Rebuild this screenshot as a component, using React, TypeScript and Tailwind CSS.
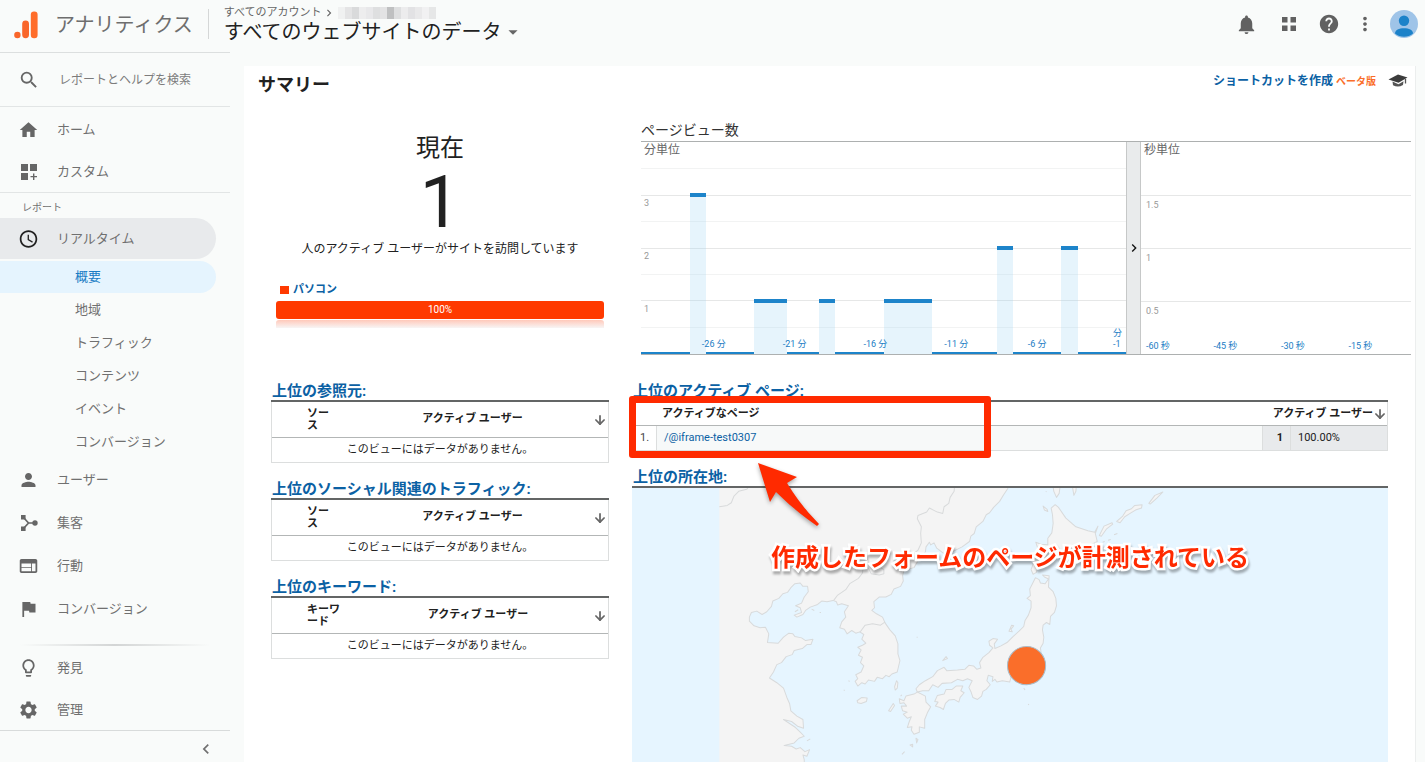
import type { ReactNode } from "react";
import { ArrowDown } from "lucide-react";
import {
  MdAccessTime,
  MdArrowDropDown,
  MdChevronLeft,
  MdChevronRight,
  MdFlag,
  MdHelp,
  MdHome,
  MdLightbulbOutline,
  MdMoreVert,
  MdNotifications,
  MdPerson,
  MdSearch,
  MdSettings,
  MdWeb,
} from "react-icons/md";

const Logo = () => (
  <svg width="24" height="28" viewBox="0 0 24 28" aria-hidden="true">
    <circle cx="3.4" cy="24" r="3.2" fill="#f9662a" />
    <rect x="8.2" y="9.5" width="6.8" height="17.7" rx="3.4" fill="#f9662a" />
    <rect x="16.8" y="0.5" width="6.8" height="26.7" rx="3.2" fill="#ff6d2a" />
  </svg>
);

const CustomIcon = () => (
  <svg width="18" height="18" viewBox="0 0 18 18" fill="currentColor" aria-hidden="true">
    <path d="M1 1h7v7H1zM10 1h7v7h-7zM1 10h7v7H1zM13 10.5h1.4v2.4H17v1.4h-2.6V17H13v-2.7h-2.5v-1.4H13z" />
  </svg>
);

const AcquisitionIcon = () => (
  <svg width="18" height="18" viewBox="0 0 18 18" fill="currentColor" aria-hidden="true">
    <path d="M1 1h4.6v4.6H1zM1 12.4h4.6V17H1z" />
    <circle cx="15" cy="9" r="2.7" />
    <path d="M4 4l4.5 5L4 14M8.5 9H14" fill="none" stroke="currentColor" strokeWidth="1.7" />
  </svg>
);

const AppsIcon = () => (
  <svg width="14" height="14" viewBox="0 0 14 14" fill="currentColor" aria-hidden="true">
    <path d="M0 0h5.5v5.5H0zM8.5 0H14v5.5H8.5zM0 8.5h5.5V14H0zM8.5 8.5H14V14H8.5z" />
  </svg>
);

const CapIcon = () => (
  <svg width="20" height="14" viewBox="0 0 20 14" aria-hidden="true">
    <path d="M0.500 5.500L10 0.500 19.500 3.500 10.500 8.800Z" fill="#3c3c3c" />
    <path d="M4.500 7.500L10.500 10.300 15.500 7.200 15 11Q10 14 5 11.200Z" fill="#555" />
    <path d="M17.500 5V9.500" stroke="#555" strokeWidth="1.300" />
  </svg>
);

const Avatar = () => (
  <svg width="28" height="28" viewBox="0 0 28 28" aria-hidden="true">
    <circle cx="14" cy="14" r="14" fill="#9fc4e8" />
    <circle cx="14" cy="10.8" r="5.2" fill="#1c82c9" />
    <path d="M5 23.500c0-3.600 4-5.300 9-5.300s9 1.700 9 5.300a14 14 0 0 1-18 0z" fill="#1c82c9" />
  </svg>
);

// blurred account name
const mosaic = [
  "bg-[#f0f1f1]", "bg-[#e4e4e5]", "bg-[#d9dadb]", "bg-[#ededee]", "bg-[#e8e8ea]", "bg-[#dedfe0]", "bg-[#e3e3e4]",
  "bg-[#bfc0c1]", "bg-[#dedfe0]", "bg-[#ececed]", "bg-[#e2e2e4]", "bg-[#e9e9ea]", "bg-[#f1f1f2]", "bg-[#e6e7e7]",
];

const Header = () => (
  <header className="flex h-[52px] items-center pb-1 pr-[7px]">
    <a href="#" className="flex items-center gap-[17px] pl-[14px] pt-0.5 text-xl leading-7 text-[#6e6e6e]">
      <Logo />
      アナリティクス
    </a>
    <div className="ml-[15px] h-[30px] w-px bg-[#d5d7d7]" />
    <div className="ml-[15px] flex flex-col">
      <div className="flex h-4 items-center text-[11px] leading-4 text-[#666]">
        すべてのアカウント
        <MdChevronRight className="text-sm" />
        <span className="ml-0.5 flex h-3">
          {mosaic.map((color, i) => (
            <span key={i} className={`h-3 w-[7px] ${color}`} />
          ))}
        </span>
      </div>
      <button className="flex items-center text-xl leading-[22px] text-[#212121]">
        すべてのウェブサイトのデータ
        <MdArrowDropDown className="text-[22px] text-[#666]" />
      </button>
    </div>
    <div className="ml-auto flex items-center text-[#616161]">
      <button aria-label="通知" className="mr-6"><MdNotifications className="text-[23px]" /></button>
      <button aria-label="アプリ" className="mr-[22px]"><AppsIcon /></button>
      <button aria-label="ヘルプ" className="mr-[14px]"><MdHelp className="text-[22px]" /></button>
      <button aria-label="その他" className="mr-[14px]"><MdMoreVert className="text-[22px]" /></button>
      <button aria-label="アカウント"><Avatar /></button>
    </div>
  </header>
);

const NavItem = ({ icon, label, className }: { icon: ReactNode; label: string; className: string }) => (
  <a href="#" className={`flex items-center gap-[18px] pl-[18px] pt-px text-[13px] ${className}`}>
    <span className="flex w-[21px] justify-center text-[22px] text-[#666]">{icon}</span>
    {label}
  </a>
);

const subItems = ["地域", "トラフィック", "コンテンツ", "イベント", "コンバージョン"];

const Sidebar = () => (
  <nav className="flex w-[230px] shrink-0 flex-col border-t border-[#dcdfdf] text-[#707070]">
    <div className="flex h-[54px] items-center gap-[19px] border-b border-[#e2e5e5] pl-[18px]">
      <MdSearch className="text-[22px] text-[#666]" />
      <input
        aria-label="レポートとヘルプを検索"
        placeholder="レポートとヘルプを検索"
        className="w-40 bg-transparent text-xs outline-none placeholder:text-[#7c7c7c]"
      />
    </div>
    <div className="border-b border-[#e2e5e5] pt-px">
      <NavItem icon={<MdHome />} label="ホーム" className="h-[42px]" />
      <NavItem icon={<CustomIcon />} label="カスタム" className="h-[42px]" />
    </div>
    <p className="h-[25px] pl-[22px] pt-[7px] text-[10px] leading-4">レポート</p>
    <NavItem
      icon={<MdAccessTime className="text-[#212121]" />}
      label="リアルタイム"
      className="mr-[14px] h-[41px] rounded-r-full bg-[#e8eaec]"
    />
    <a href="#" className="mr-[14px] mt-0.5 flex h-8 items-center rounded-r-full bg-[#e5f4fe] pl-[75px] text-[13px] text-[#1a7cc4]">
      概要
    </a>
    {subItems.map((item) => (
      <a key={item} href="#" className="flex h-[33px] items-center pl-[75px] pt-px text-[13px]">
        {item}
      </a>
    ))}
    <NavItem icon={<MdPerson />} label="ユーザー" className="h-[43px]" />
    <NavItem icon={<AcquisitionIcon />} label="集客" className="h-[43px]" />
    <NavItem icon={<MdWeb />} label="行動" className="h-[43px]" />
    <NavItem icon={<MdFlag />} label="コンバージョン" className="h-[43px]" />
    <div className="mx-5 mt-[14px] h-0.5 bg-linear-to-r from-transparent via-[#d3d5d5] to-transparent" />
    <NavItem icon={<MdLightbulbOutline />} label="発見" className="h-[42px]" />
    <NavItem icon={<MdSettings />} label="管理" className="h-[42px]" />
    <div className="mt-auto flex h-[33px] items-center justify-end border-t border-[#d8dbdb] pr-[14px] pt-1">
      <button aria-label="メニューを閉じる"><MdChevronLeft className="text-[20px]" /></button>
    </div>
  </nav>
);

const minutes = [0, 0, 0, 3, 0, 0, 0, 1, 1, 0, 0, 1, 0, 0, 0, 1, 1, 1, 0, 0, 0, 0, 2, 0, 0, 0, 2, 0, 0, 0];
const slot = 485 / 30;
const unit = 53;
const base = 212;

const MinuteChart = () => (
  <div className="relative h-full flex-[485]">
    <svg
      className="absolute inset-0 h-full w-full"
      viewBox="0 0 485 212"
      preserveAspectRatio="none"
      shapeRendering="crispEdges"
      aria-hidden="true"
    >
      {[26, 53, 79, 106, 132, 158, 185].map((y, i) => (
        <rect key={y} x="0" y={y} width="485" height="1" fill={i % 2 ? "#e6e7e7" : "#f2f3f3"} />
      ))}
      {minutes.map((value, i) => (
        <g key={i}>
          {value > 0 && (
            <rect x={i * slot} y={base - value * unit} width={slot} height={value * unit} fill="#9dd3f5" fillOpacity="0.25" />
          )}
          <rect
            x={i * slot}
            y={value > 0 ? base - value * unit - 2 : 210}
            width={slot}
            height={value > 0 ? 4 : 2}
            fill="#1d84ca"
          />
        </g>
      ))}
    </svg>
    <span className="absolute left-0 top-0 bg-white pl-[3px] pr-1 text-xs leading-4 text-[#666]">分単位</span>
    {[3, 2, 1].map((n) => (
      <span key={n} className="absolute left-[3px] text-[9px] leading-3 text-[#999]" style={{ top: base - n * unit + 2 }}>
        {n}
      </span>
    ))}
    {[26, 21, 16, 11, 6].map((n) => (
      <span
        key={n}
        className="absolute bottom-1 -translate-x-1/2 whitespace-nowrap text-[9px] leading-3 text-[#1a7cc4]"
        style={{ left: `${((30 - n + 0.5) / 30) * 100}%` }}
      >
        -{n} 分
      </span>
    ))}
    <span className="absolute bottom-1 right-1 text-[9px] leading-[11px] text-[#1a7cc4]">
      分
      <br />
      -1
    </span>
  </div>
);

const SecondChart = () => (
  <div className="relative h-full flex-[270]">
    <div className="flex h-full flex-col pt-[53px] text-[9px] leading-3 text-[#999]">
      {["1.5", "1", "0.5"].map((n) => (
        <div key={n} className="h-[53px] border-t border-[#e6e7e7] pl-[5px] pt-[3px]">{n}</div>
      ))}
    </div>
    <span className="absolute left-0 top-0 bg-white pl-[3px] pr-1 text-xs leading-4 text-[#666]">秒単位</span>
    <div className="absolute inset-x-0 bottom-0.5 grid grid-cols-4 text-[9px] leading-3 text-[#1a7cc4]">
      {[60, 45, 30, 15].map((n) => (
        <span key={n} className="pl-[5px]">-{n} 秒</span>
      ))}
    </div>
  </div>
);

const PageViews = () => (
  <section className="pl-[9px] pt-[18px]">
    <h2 className="text-sm leading-[21px] text-[#333]">ページビュー数</h2>
    <div className="flex h-[214px] border-y border-[#adb0b0]">
      <MinuteChart />
      <button aria-label="開く" className="flex w-[15px] items-center justify-center border-x border-[#c6c8c8] bg-[#e9ebec] text-[#111]">
        <MdChevronRight className="shrink-0 text-base" />
      </button>
      <SecondChart />
    </div>
  </section>
);

const ActiveNow = () => (
  <section className="flex h-[278px] flex-col pt-[30px] text-[#212121]">
    <h2 className="text-center text-2xl leading-8">現在</h2>
    <p className="mt-[3px] text-center text-7xl leading-[72px]">1</p>
    <p className="text-center text-xs leading-5">人のアクティブ ユーザーがサイトを訪問しています</p>
    <div className="mt-[23px] flex items-center gap-1 pl-[9px] text-[11px] leading-4 font-bold text-[#0b61a4]">
      <span className="h-2 w-[9px] bg-[#ff3a00]" />
      パソコン
    </div>
    <div className="mx-[5px] mt-[3px] h-[18px] rounded-[3px] bg-[#ff3a00] text-center text-[10px] leading-[18px] text-white">100%</div>
    <div className="mx-[5px] mt-px h-2 rounded-t-[3px] bg-linear-to-b from-[#ffc9ba] to-[#f7f5f5]" />
  </section>
);

const BlockTitle = ({ children }: { children: ReactNode }) => (
  <h2 className="border-b-2 border-[#636565] pl-px pt-0.5 text-[15px] leading-[18px] font-bold text-[#0b61a4]">
    <a href="#">{children}</a>
  </h2>
);

const SortArrow = () => <ArrowDown className="size-[14px] text-[#666]" strokeWidth={3} />;

const emptyBlocks = [
  { title: "上位の参照元:", column: ["ソー", "ス"] },
  { title: "上位のソーシャル関連のトラフィック:", column: ["ソー", "ス"] },
  { title: "上位のキーワード:", column: ["キーワ", "ード"] },
];

const EmptyBlock = ({ title, column }: { title: string; column: string[] }) => (
  <section>
    <BlockTitle>{title}</BlockTitle>
    <table className="w-full border-separate border-spacing-0 border-x border-[#dcdede] text-[11px] text-[#212121]">
      <thead>
        <tr>
          <th className="h-9 w-px whitespace-nowrap border-b border-[#b3b6b6] pl-[35px] pr-[23px] text-left leading-3">
            {column[0]}
            <br />
            {column[1]}
          </th>
          <th className="border-b border-[#b3b6b6] text-center">アクティブ ユーザー</th>
          <th className="w-[15px] border-b border-[#b3b6b6]" aria-label="並べ替え"><SortArrow /></th>
        </tr>
      </thead>
      <tbody>
        <tr>
          <td colSpan={3} className="h-[25px] border-b border-[#dcdede] text-center leading-4">
            このビューにはデータがありません。
          </td>
        </tr>
      </tbody>
    </table>
  </section>
);

const ActivePages = () => (
  <table className="w-full border-separate border-spacing-0 border-r border-[#dcdede] text-[11px] text-[#212121]">
    <thead>
      <tr className="text-left leading-4">
        <th className="h-6 w-[25px] border-b border-[#b3b6b6]" />
        <th className="border-b border-[#b3b6b6] pl-[5px]">アクティブなページ</th>
        <th colSpan={2} className="w-[125px] border-b border-[#b3b6b6]">
          <span className="flex items-center justify-end whitespace-nowrap">
            アクティブ ユーザー
            <SortArrow />
          </span>
        </th>
      </tr>
    </thead>
    <tbody>
      <tr className="bg-[#f7f9f9] leading-4">
        <td className="h-[25px] border-b border-r border-[#dcdede] bg-white pl-2 text-[#444]">1.</td>
        <td className="border-b border-[#dcdede] pl-[7px]"><a href="#" className="text-[#0b61a4]">/@iframe-test0307</a></td>
        <td className="w-[29px] border-b border-x border-[#dcdede] bg-[#e8eaec] pr-[7px] text-right font-bold">1</td>
        <td className="w-24 border-b border-[#dcdede] bg-[#e8eaec] pl-[7px]">100.00%</td>
      </tr>
    </tbody>
  </table>
);

const LocationMap = () => (
  <div className="relative min-h-[274px] flex-1 bg-[#e6f5ff]">
    <svg
      className="absolute inset-0 h-full w-full"
      viewBox="0 0 756 274"
      preserveAspectRatio="xMidYMin slice"
      role="img"
      aria-label="日本周辺の地図"
    >
      <g transform="translate(-11 -8) scale(0.33333)" fill="#f4f4f4" stroke="#d8dadb" strokeWidth="3" strokeLinejoin="round">
        {/* continent and Korean peninsula */}
        <path d="M298 10H1166L1160 26 1148 44 1136 64 1118 82 1106 98 1096 104 1086 124 1066 140 1060 160 1050 168 1046 184 1024 200 1000 212 972 222 948 204 940 188 930 194 926 186 916 200 914 216 900 228 880 262 850 270 846 286 848 302 840 318 820 326 812 342 796 350 776 350 760 364 762 382 754 390 768 400 786 410 794 428 808 448 824 466 832 490 832 520 838 540 830 574 814 580 806 588 796 584 786 594 770 590 762 602 744 598 734 610 724 606 712 616 704 602 712 594 706 582 722 574 730 556 720 546 726 530 714 524 722 508 712 500 726 494 736 488 724 476 730 462 718 454 706 458 694 450 680 460 672 446 658 442 664 424 676 410 672 394 684 376 664 370 652 374 648 364 638 360 620 364 604 362 592 372 570 380 556 390 548 402 530 410 522 404 544 396 540 382 526 376 544 368 552 350 564 334 562 318 548 318 540 308 524 310 512 322 502 336 488 340 476 354 458 362 454 378 440 394 426 402 410 392 394 396 388 410 388 422 402 436 420 442 436 440 446 460 442 486 474 488 490 470 506 458 518 460 524 468 544 472 556 480 578 476 572 492 560 492 546 504 522 510 516 522 498 528 484 546 470 552 460 574 448 592 470 606 490 622 500 650 508 668 512 690 530 706 548 716 550 742 532 736 514 722 490 716 508 728 526 740 540 754 552 766 536 772 522 786 492 794 514 796 528 804 540 800 554 812 568 806 560 826 548 822 552 836 552 860H298" />
        <path d="M1002 10L1000 34 988 52 984 70 970 80 966 100 950 96 926 84 918 96 892 106 890 116 902 140 900 160 902 188 892 210 872 226 856 240" fill="none" />
        <path d="M298 80L322 76 334 68 342 48 356 34 380 28 386 20M640 360L652 344 676 328 688 310 714 294 726 278 728 262 744 264 752 280 776 284 790 280 790 268 780 262M718 456L734 434 756 430 780 434 794 424" fill="none" />
        {/* Honshu */}
        <path d="M1243 292L1254 298 1258 308 1272 310 1282 296 1270 290 1264 284 1284 286 1282 320 1296 334 1304 354 1306 376 1300 396 1288 408 1286 432 1276 426 1266 434 1264 448 1268 470 1266 488 1258 502 1262 530 1240 560 1220 580 1200 594 1170 590 1166 604 1144 600 1128 604 1122 596 1114 602 1116 588 1102 584 1098 600 1108 612 1096 626 1086 632 1082 646 1070 656 1056 650 1050 632 1044 620 1054 600 1040 594 1026 600 1010 596 992 606 964 608 952 620 936 612 924 630 906 630 890 634 886 624 896 612 914 600 936 588 950 570 970 560 978 570 1010 568 1032 566 1044 554 1058 556 1068 566 1080 562 1076 546 1086 530 1104 516 1116 502 1106 494 1104 482 1116 474 1130 476 1120 490 1122 504 1140 496 1158 486 1176 468 1194 452 1208 438 1212 420 1222 404 1230 382 1230 362 1218 354 1228 346 1226 326Z" />
        {/* Hokkaido */}
        <path d="M1290 84L1302 74 1312 82 1334 114 1364 140 1400 152 1420 156 1430 138 1422 160 1428 184 1400 198 1380 220 1340 236 1300 230 1270 236 1250 258 1246 276 1236 282 1230 268 1238 246 1236 220 1252 210 1244 186 1260 192 1280 194 1280 174 1292 158 1296 130 1294 104Z" />
        {/* Kyushu and Shikoku */}
        <path d="M836 654L850 660 856 646 880 640 890 634 914 646 916 664 930 678 920 696 912 716 912 742 896 738 896 754 880 760 872 748 874 738 860 740 866 722 872 708 860 712 848 700 860 694 846 690 842 676 858 676 850 666 838 668Z" />
        <path d="M942 662L950 644 970 640 976 626 994 626 1006 616 1026 616 1020 630 1030 636 1018 650 1014 664 1000 656 984 658 974 668 968 686 958 680 944 676 952 664Z" />
        {/* islands */}
        <path d="M710 660L724 650 740 652 738 662 722 668 712 666ZM828 600L832 606 830 622 824 628 822 618ZM804 690L818 668 822 674 810 692ZM1164 452L1172 434 1178 436 1170 446 1174 454ZM966 540L976 528 980 534ZM888 786L886 772 892 776ZM868 792L876 790 876 798ZM844 820L852 812M684 600L688 602M670 628L673 629M888 470L891 470M1208 622L1212 628M1221 670L1224 672M840 646L844 642M560 780L570 774M524 394L534 388M598 396L602 396M574 386L582 390" />
        <path d="M1434 166L1448 138 1472 128 1474 132 1456 146 1440 168ZM1486 124L1504 108 1514 92 1530 86 1540 76 1562 74 1560 84 1542 90 1526 100 1510 110 1496 128ZM1582 70L1600 46 1624 36 1606 54 1586 72ZM1294 10H1318L1314 40 1306 52 1298 34ZM1352 10H1366L1364 34 1358 46ZM1266 78L1278 88 1280 94 1270 90ZM1274 34L1276 36M1478 164L1488 160M1460 180L1468 178M1444 186L1450 184" />
      </g>
      <circle cx="394.5" cy="177" r="19" fill="#fa6e2a" stroke="#a9bcc9" />
    </svg>
  </div>
);

// red highlight, arrow and caption over the tables
const Annotation = () => (
  <div className="pointer-events-none absolute inset-0">
    <div className="absolute -left-[3px] top-4 h-[62px] w-[362px] rounded-[3px] border-[7px] border-[#ff2a00]" />
    <svg
      className="absolute left-[126px] top-[82px] drop-shadow-[0_2px_2px_rgba(0,0,0,0.35)]"
      width="64"
      height="68"
      viewBox="0 0 64 68"
      aria-hidden="true"
    >
      <path d="M0 1L39 15 29 21Q43 44 61 62L59 64Q36 48 18 30L12 40Z" fill="#ff2a00" />
    </svg>
    <p className="absolute left-[139px] top-[162px] whitespace-nowrap text-2xl leading-8 font-bold text-[#ff2a00] drop-shadow-[1px_3px_1px_rgba(0,0,0,0.3)] [-webkit-text-stroke:5px_white] [paint-order:stroke_fill]">
      作成したフォームのページが計測されている
    </p>
  </div>
);

export default function App() {
  return (
    <div className="flex min-h-screen flex-col bg-[#f9fbfa] font-[Roboto,'Noto_Sans_CJK_JP',sans-serif]">
      <Header />
      <div className="flex flex-1">
        <Sidebar />
        <main className="ml-[14px] mr-[9px] mt-[14px] flex flex-1 flex-col border-r border-[#eceeee] bg-white">
          <div className="flex h-9 items-center pl-[14px] pr-[7px]">
            <h1 className="pt-0.5 text-lg font-bold text-[#212121]">サマリー</h1>
            <div className="ml-auto flex items-center pb-1.5 font-bold">
              <a href="#" className="text-xs text-[#0b61a4]">ショートカットを作成</a>
              <span className="ml-[3px] text-[10px] text-[#fa6e2a]">ベータ版</span>
              <button aria-label="教育" className="ml-3"><CapIcon /></button>
            </div>
          </div>
          <div className="grid flex-1 grid-cols-[338fr_779fr] gap-x-[23px] pl-[27px] pr-1">
            <div>
              <ActiveNow />
              <div className="flex flex-col gap-[15px]">
                {emptyBlocks.map((block) => (
                  <EmptyBlock key={block.title} {...block} />
                ))}
              </div>
            </div>
            <div className="flex flex-col">
              <PageViews />
              <div className="relative mr-[23px] mt-[25px] flex flex-1 flex-col">
                <BlockTitle>上位のアクティブ ページ:</BlockTitle>
                <ActivePages />
                <div className="h-[15px]" />
                <BlockTitle>上位の所在地:</BlockTitle>
                <LocationMap />
                <Annotation />
              </div>
            </div>
          </div>
        </main>
      </div>
    </div>
  );
}
